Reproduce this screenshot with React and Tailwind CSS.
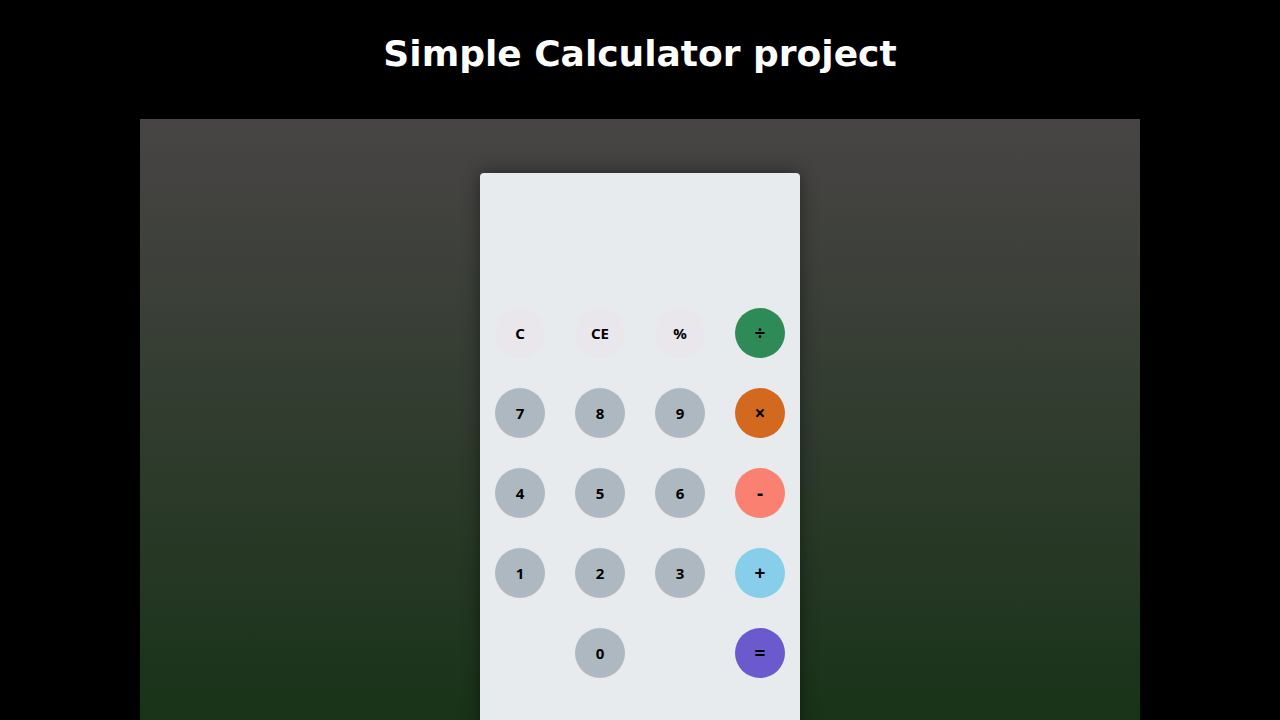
import React from 'react';

const rows = [
    [
        { label: 'C', cls: 'bg-[#e9e7eb]' },
        { label: 'CE', cls: 'bg-[#e9e7eb]' },
        { label: '%', cls: 'bg-[#e9e7eb]' },
        { label: '÷', cls: 'bg-[#2e8b57]', op: true },
    ],
    [
        { label: '7', cls: 'bg-[#adb8c1]' },
        { label: '8', cls: 'bg-[#adb8c1]' },
        { label: '9', cls: 'bg-[#adb8c1]' },
        { label: '×', cls: 'bg-[#d2691e]', op: true },
    ],
    [
        { label: '4', cls: 'bg-[#adb8c1]' },
        { label: '5', cls: 'bg-[#adb8c1]' },
        { label: '6', cls: 'bg-[#adb8c1]' },
        { label: '-', cls: 'bg-[#fa8072]', op: true },
    ],
    [
        { label: '1', cls: 'bg-[#adb8c1]' },
        { label: '2', cls: 'bg-[#adb8c1]' },
        { label: '3', cls: 'bg-[#adb8c1]' },
        { label: '+', cls: 'bg-[#87ceeb]', op: true },
    ],
    [
        null,
        { label: '0', cls: 'bg-[#adb8c1]' },
        null,
        { label: '=', cls: 'bg-[#6a5acd]', op: true },
    ],
];

export default function App() {
    return (
        <div className="w-[1280px] h-[720px] bg-black overflow-hidden flex flex-col">
            {/* Title */}
            <div className="h-[119px] shrink-0 pt-[30px] text-center">
                <h1 className="m-0 text-[36px] leading-[48px] font-bold text-white font-['DejaVu_Sans',sans-serif]">
                    Simple Calculator project
                </h1>
            </div>

            {/* Stage */}
            <div className="mx-[140px] flex-1 bg-gradient-to-b from-[#484445] to-[#183318] flex justify-center pt-[54px] overflow-hidden">
                <div className="w-[320px] h-[560px] shrink-0 bg-[#e8ebee] rounded-t-[4px] shadow-[0_0_18px_rgba(0,0,0,0.45)] flex flex-col">
                    {/* Display */}
                    <div className="h-[120px] shrink-0" />

                    {/* Keypad */}
                    <div className="grid grid-cols-4">
                        {rows.flat().map((key, i) => (
                            <div key={i} className="w-[80px] h-[80px] flex items-center justify-center">
                                {key && (
                                    <button className={`w-[50px] h-[50px] rounded-full border-none flex items-center justify-center font-bold text-black font-['Noto_Sans',sans-serif] ${key.op ? 'text-[19px]' : 'text-[15px]'} ${key.cls}`}>
                                        {key.label}
                                    </button>
                                )}
                            </div>
                        ))}
                    </div>
                </div>
            </div>
        </div>
    );
}
